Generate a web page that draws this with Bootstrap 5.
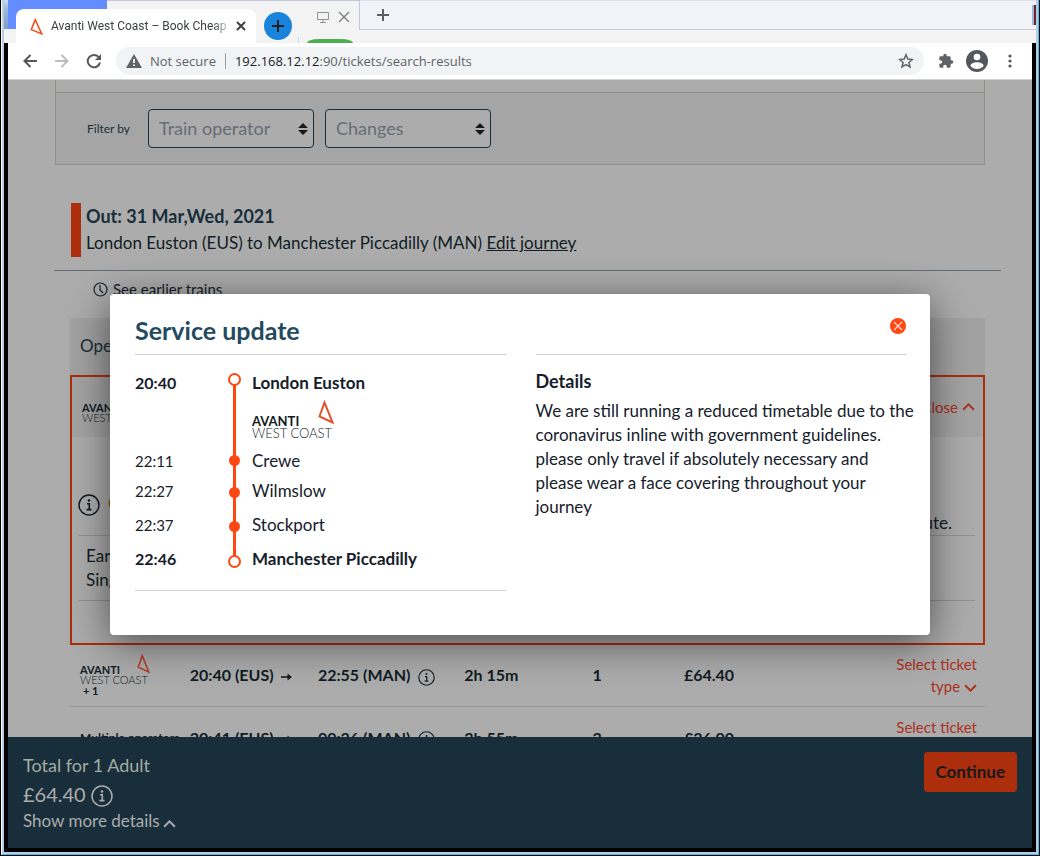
<!DOCTYPE html>
<html lang="en">
<head>
<meta charset="utf-8">
<meta name="viewport" content="width=device-width, initial-scale=1">
<title>Avanti West Coast – Book Cheap Train Tickets</title>
<link href="https://cdn.jsdelivr.net/npm/bootstrap@5.3.0/dist/css/bootstrap.min.css" rel="stylesheet">
<style>
  body { font-family: Lato, "Liberation Sans", sans-serif; font-size: 17px; line-height: 24px; color: #15202b; background: #000; }
  h1, h2, h3, p, ol { margin: 0; }
  .plain { border: 0; padding: 0; background: none; color: inherit; line-height: 0; }

  /* window frame */
  .win { height: 100vh; border: solid #000; border-width: 0 1px 1px; }
  .win-edge { border: solid #35c6e8; border-width: 0 1px 1px; border-left-color: #fff; background: #b8cce8; padding: 0 2px 2px; }
  .win-client { border: 4px solid #000; border-top: 0; min-height: 0; }
  .chrome-font { font-family: "Open Sans", "Noto Sans", sans-serif; font-size: 13px; }

  /* tab strip */
  .strip { height: 43px; background: #f3f3f4; }
  .strip-grip { width: 4px; height: 29px; background: linear-gradient(#cfdcea, #9db8d8 30%, #7f9fc0); }
  .strip-blue { width: 99px; height: 29px; background: #628cff; }
  .strip-mid { width: 253px; height: 30px; border-top: 1px solid #c3c9dc; border-right: 1px solid #c3c9dc; }
  .strip-rest { height: 30px; background: #f1f3f9; border-top: 1px solid #dde0ea; border-bottom: 1px solid #c6cddf; padding-left: 16px; }
  .strip-red { width: 4px; height: 20px; background: #9db8d8; border-right: 2px solid #6a2430; }
  .tab-front { left: 12px; top: 9px; width: 240px; height: 34px; background: #fff; border-radius: 8px 8px 0 0; padding: 0 10px 0 14px; gap: 8px; }
  .tab-name { font-family: Roboto, sans-serif; font-size: 12px; color: #3c4043; -webkit-mask-image: linear-gradient(90deg, #000 92%, rgba(0, 0, 0, .3)); mask-image: linear-gradient(90deg, #000 92%, rgba(0, 0, 0, .3)); }
  .tab-add { left: 260px; top: 12px; width: 28px; height: 28px; background: #1a83dc; }
  .tab-back { left: 294px; top: 10px; width: 60px; height: 33px; border: 0; }
  .tab-back::before { content: ""; position: absolute; left: 0; bottom: 0; height: 6px; border-left: 1px solid #d5d5d8; }
  .tab-back::after { content: ""; position: absolute; left: 9px; bottom: 0; width: 46px; height: 4px; background: #4caf50; border-radius: 12px 12px 0 0 / 4px 4px 0 0; }

  /* address bar */
  .tools { height: 37px; background: #fff; border-bottom: 1px solid #d2d2d2; padding: 0 16px 0 14px; color: #5f6368; }
  .omni { height: 28px; background: #f1f3f4; border-radius: 14px; padding: 0 10px; margin: 0 14px; }
  .omni-sep { width: 1px; height: 16px; background: #9aa0a6; margin: 0 9px; }
  .omni-url b { font-weight: 400; color: #202124; }

  /* page */
  .stage { background: #acacac; min-height: 0; }
  .wrap { padding: 0 47px; }
  .panel-top { height: 12px; border: solid #918f88; border-width: 0 1px; }
  .filters { background: #a5a5a5; border: 1px solid #918f88; padding: 16px 31px; gap: 11px; }
  .filters label { font-size: 12px; margin-right: 7px; color: #182e3a; }
  .pick { appearance: none; width: 166px; height: 39px; border: 1px solid #182e3a; border-radius: 4px; color: #666c76; font-size: 18px; padding: 0 22px 2px 10px;
    background: #acacac url("data:image/svg+xml,%3Csvg xmlns='http://www.w3.org/2000/svg' viewBox='0 0 10 12'%3E%3Cpath fill='%23151a1e' d='M5 0l5 5H0zM5 12l5-5H0z'/%3E%3C/svg%3E") no-repeat right 5px center / 10px 12px; }
  .leg { border-left: 10px solid #ac2e0d; padding-left: 5px; margin: 38px 0 13px 16px; line-height: 28px; color: #111c24; }
  .leg h2 { font-size: 18px; font-weight: 700; line-height: 26px; color: #182e3a; }
  .leg-rule { height: 1px; background: #626c74; margin: 0 -16px 0 -1px; }
  .leg a { color: inherit; }
  .earlier { padding: 7px 0 16px 38px; font-size: 15px; line-height: 22px; }
  .earlier a { gap: 5px; color: #15202b; }

  .fares { table-layout: fixed; width: calc(100% - 15px); margin-left: 15px; font-size: 16px; font-weight: 700; color: #111c24; }
  .fares th { height: 57px; background: #a2a2a2; font-size: 17px; font-weight: 400; padding: 0 10px; color: #182e3a; }
  .fares td { height: 62px; padding: 0 8px 0 10px; border-bottom: 1px solid #969696; white-space: nowrap; }
  .fares td.open-cell { padding: 0; border: 0; }
  .red-link { color: #ac3020; text-decoration: none; font-weight: 400; font-size: 15px; line-height: 22px; }
  .open-card { height: 270px; border: 2px solid #ac2e0d; background: #acacac; font-weight: 400; font-size: 17px; }
  .open-head { height: 60px; background: #a4a4a4; padding: 0 8px 0 10px; }
  .note { margin-top: 47px; padding: 2px 31px 0 6px; gap: 8px; height: 51px; }
  .note strong { color: #ac4a0d; line-height: 20px; }
  .note-text { line-height: 20px; padding-top: 7px; }
  .ticket-line { border: solid #929290; border-width: 1px 0; margin: 0 8px 0 6px; padding: 8px; height: 66px; }
  .extra { font-size: 11px; line-height: 12px; padding-left: 3px; }
  .fares .many { font-size: 12px; }

  /* operator logo */
  .oplogo { width: 70px; font-size: 11px; line-height: 10px; color: #111c24; }
  .oplogo-top { height: 22px; font-weight: 700; }
  .oplogo-top svg { width: 13px; height: 21px; margin-bottom: 1px; }
  .oplogo-sub { font-weight: 300; white-space: nowrap; }
  .oplogo-lg { width: 82px; font-size: 13px; line-height: 12px; }
  .oplogo-lg .oplogo-top { height: 27px; }
  .oplogo-lg .oplogo-top svg { width: 16px; height: 24px; margin-bottom: 3px; }

  /* basket bar */
  .basket { background: #182e3a; color: #acacac; height: 111px; padding: 15px 15px 0; }
  .basket-title { font-size: 18px; line-height: 27px; color: #a2aca2; }
  .basket-sum { font-size: 20px; line-height: 30px; gap: 5px; }
  .basket-sum svg { margin-top: 4px; }
  .basket-more { line-height: 24px; font-size: 17px; gap: 3px; }
  .basket-more svg { margin-top: 4px; }
  .go { background: #ac2e0d; color: #15191d; font-weight: 700; font-size: 17px; border-radius: 4px; height: 40px; padding: 0 12px; border: 0; min-width: 93px; }

  /* dialog */
  .update-modal { position: absolute; }
  .update-modal .modal-dialog { max-width: 820px; min-height: 100%; margin-top: 0; margin-bottom: 0; }
  .update-modal .modal-content { border: 0; border-radius: 4px; box-shadow: 0 8px 40px rgba(0, 0, 0, .55); padding: 24px 24px 44px 25px; }
  .halves { display: grid; grid-template-columns: 1fr 1fr; column-gap: 30px; }
  .half-head { height: 37px; border-bottom: 1px solid #d5cfc9; }
  .half-head h1 { font-size: 25px; line-height: 25px; font-weight: 700; color: #234a5e; }
  .route { list-style: none; padding: 16px 0 19px; border-bottom: 1px solid #d5cfc9; }
  .route li { display: grid; grid-template-columns: 91px 26px 1fr; min-height: 34px; }
  .route time { font-size: 15px; }
  .route .origin { min-height: 78px; }
  .route .close-stop { min-height: 30px; }
  .route .end-stop { min-height: 24px; }
  .route b, .route .origin time, .route .end-stop time { font-weight: 700; }
  .route .origin time, .route .end-stop time { font-size: 16px; }
  .dot-col { display: flex; flex-direction: column; align-items: center; width: 17px; padding-top: 8px;
    background: linear-gradient(#ff4713, #ff4713) no-repeat center / 3px 100%; }
  .dot-col i { flex: none; width: 11px; height: 11px; border-radius: 50%; background: #ff4713; }
  .dot-col .ring { width: 13px; height: 13px; background: #fff; border: 2px solid #ff4713; }
  .origin .dot-col { padding-top: 2px; background-position: center 8px; }
  .close-stop .dot-col { padding-top: 6px; }
  .end-stop .dot-col { background-size: 3px 10px; background-position: center top; }
  .route .oplogo { margin-top: 5px; }
  .detail { padding-top: 14px; margin-right: -10px; }
  .detail h2 { font-size: 18px; line-height: 24px; font-weight: 700; margin-bottom: 6px; }
</style>
</head>
<body>
<svg class="d-none" xmlns="http://www.w3.org/2000/svg">
  <symbol id="tri" viewBox="0 0 16 24"><path d="M6.500 2.500 L1.500 16.500 L14.500 22.500 Z" fill="none" stroke="currentColor" stroke-width="2"/></symbol>
  <symbol id="info" viewBox="0 0 22 22"><circle cx="11" cy="11" r="10" fill="none" stroke="currentColor" stroke-width="1.500"/><circle cx="11" cy="6.500" r="1.300" fill="currentColor"/><path d="M9 9.800h2.300v5.500M8.500 15.600h5" fill="none" stroke="currentColor" stroke-width="1.600"/></symbol>
  <symbol id="up" viewBox="0 0 12 8"><path d="M1 7l5-5 5 5" fill="none" stroke="currentColor" stroke-width="1.800"/></symbol>
  <symbol id="down" viewBox="0 0 12 8"><path d="M1 1l5 5 5-5" fill="none" stroke="currentColor" stroke-width="1.800"/></symbol>
  <symbol id="arrow" viewBox="0 0 12 10"><path d="M0 5h8" stroke="currentColor" stroke-width="1.600"/><path d="M6.500 1.500L11 5l-4.500 3.500z" fill="currentColor"/></symbol>
</svg>

<div class="win overflow-hidden">
<div class="win-edge h-100 d-flex flex-column">

  <header class="strip position-relative d-flex align-items-start flex-shrink-0 chrome-font">
    <div class="strip-grip"></div>
    <div class="strip-blue"></div>
    <div class="strip-mid"></div>
    <div class="strip-rest flex-grow-1 d-flex align-items-center justify-content-between">
      <button class="plain" aria-label="Add"><svg width="14" height="14" viewBox="0 0 14 14"><path d="M7 1v12M1 7h12" stroke="#5a5d61" stroke-width="2"/></svg></button>
      <span class="strip-red"></span>
    </div>
    <div class="tab-front position-absolute d-flex align-items-center">
      <svg width="13" height="17" viewBox="0 0 16 24" preserveAspectRatio="none" color="#f4511e" class="flex-shrink-0"><use href="#tri"/></svg>
      <span class="tab-name flex-grow-1 text-nowrap">Avanti West Coast – Book Cheap</span>
      <button class="plain" aria-label="Close tab"><svg width="12" height="12" viewBox="0 0 12 12"><path d="M2 2l8 8M10 2l-8 8" stroke="#3c4043" stroke-width="2"/></svg></button>
    </div>
    <button class="plain tab-add position-absolute rounded-circle" aria-label="New tab"><svg width="14" height="14" viewBox="0 0 14 14"><path d="M7 1v12M1 7h12" stroke="#202124" stroke-width="2"/></svg></button>
    <div class="tab-back position-absolute">
      <svg width="41" height="14" class="d-block ms-auto me-1" viewBox="0 0 41 14" fill="none" stroke="#8f9194">
        <path d="M4.500 2.500h11v7h-11zM10 9.500v3M7 12.500h6"/><path d="M26 2l10 10M36 2L26 12" stroke="#7a7c80" stroke-width="1.300"/>
      </svg>
    </div>
  </header>

  <div class="win-client flex-grow-1 d-flex flex-column">
    <nav class="tools d-flex align-items-center flex-shrink-0 chrome-font">
      <button class="plain" aria-label="Back"><svg width="16" height="16" viewBox="0 0 16 16"><path d="M8.500 2L2.500 8l6 6M2.500 8H15" fill="none" stroke="#54585d" stroke-width="2"/></svg></button>
      <button class="plain ms-3" aria-label="Forward"><svg width="16" height="16" viewBox="0 0 16 16"><path d="M7.500 2l6 6-6 6M13.500 8H1" fill="none" stroke="#babcbe" stroke-width="2"/></svg></button>
      <button class="plain ms-3" aria-label="Reload"><svg width="16" height="16" viewBox="0 0 16 16"><path d="M13 4.500A6.200 6.200 0 1 0 14 9.500" fill="none" stroke="#54585d" stroke-width="2"/><path d="M15 1v6H9z" fill="#54585d"/></svg></button>
      <div class="omni flex-grow-1 d-flex align-items-center">
        <svg width="16" height="14" viewBox="0 0 16 14" class="me-2"><path d="M8 0l8 14H0z" fill="#5f6368"/><path d="M8 5v4M8 10.500v1.600" stroke="#fff" stroke-width="1.800"/></svg>
        <span>Not secure</span><span class="omni-sep"></span>
        <span class="omni-url flex-grow-1"><b>192.168.12.12</b>:90/tickets/search-results</span>
        <button class="plain" aria-label="Bookmark"><svg width="16" height="16" viewBox="0 0 16 16"><path d="M8 1.800l1.800 4.300 4.600.4-3.500 3 1.100 4.500L8 11.600 4 14l1.100-4.500-3.500-3 4.600-.4z" fill="none" stroke="#5f6368" stroke-width="1.500"/></svg></button>
      </div>
      <button class="plain" aria-label="Extensions"><svg width="16" height="16" viewBox="0 0 24 24" fill="#5f6368"><path d="M20.500 11H19V7a2 2 0 0 0-2-2h-4V3.500a2.500 2.500 0 0 0-5 0V5H4a2 2 0 0 0-2 2v3.800h1.500a2.700 2.700 0 0 1 0 5.400H2V20a2 2 0 0 0 2 2h3.800v-1.500a2.700 2.700 0 0 1 5.400 0V22H17a2 2 0 0 0 2-2v-4h1.500a2.500 2.500 0 0 0 0-5z"/></svg></button>
      <button class="plain mx-2 px-1" aria-label="Profile"><svg width="22" height="22" viewBox="0 0 22 22"><circle cx="11" cy="11" r="11" fill="#54585d"/><circle cx="11" cy="7" r="3.300" fill="#fff"/><path d="M4.500 16c0-5 13-5 13 0-3 4-10 4-13 0z" fill="#fff"/></svg></button>
      <button class="plain ms-1" aria-label="Menu"><svg width="12" height="16" viewBox="0 0 12 16" fill="#54585d"><circle cx="6" cy="3" r="1.600"/><circle cx="6" cy="8" r="1.600"/><circle cx="6" cy="13" r="1.600"/></svg></button>
    </nav>

    <div class="stage flex-grow-1 d-flex flex-column position-relative">
      <main class="wrap flex-grow-1 overflow-hidden">
        <div class="panel-top"></div>
        <form class="filters d-flex align-items-center">
          <label for="op">Filter by</label>
          <select id="op" class="pick"><option>Train operator</option></select>
          <select id="ch" class="pick" aria-label="Changes"><option>Changes</option></select>
        </form>

        <section class="leg">
          <h2>Out: 31 Mar,Wed, 2021</h2>
          <p>London Euston (EUS) to Manchester Piccadilly (MAN) <a href="#">Edit journey</a></p>
        </section>
        <div class="leg-rule"></div>
        <div class="earlier"><a href="#" class="d-inline-flex align-items-center text-decoration-none">
          <svg width="15" height="15" viewBox="0 0 15 15" fill="none" stroke="currentColor" stroke-width="1.200"><circle cx="7.500" cy="7.500" r="6.500"/><path d="M7 3v5l3 3"/></svg>See earlier trains</a></div>

        <table class="fares">
          <colgroup><col style="width:12%"><col style="width:14%"><col style="width:16%"><col style="width:14%"><col style="width:10%"><col></colgroup>
          <thead><tr><th>Operator</th><th></th><th></th><th></th><th></th><th></th></tr></thead>
          <tbody>
            <tr><td class="open-cell" colspan="6">
              <div class="open-card">
                <div class="open-head d-flex align-items-center justify-content-between">
                  <div class="oplogo"><div class="oplogo-top d-flex align-items-end justify-content-between">AVANTI</div><div class="oplogo-sub">WEST COAST</div></div>
                  <a href="#" class="red-link d-flex align-items-center gap-1">Close <svg width="13" height="9"><use href="#up"/></svg></a>
                </div>
                <div class="note d-flex">
                  <svg width="22" height="22" class="mt-2 flex-shrink-0"><use href="#info"/></svg>
                  <div class="note-text flex-grow-1"><strong class="d-block">Cheapest</strong><span class="d-block text-end">by any permitted route.</span></div>
                </div>
                <div class="ticket-line">Earlybird<br>Single</div>
              </div>
            </td></tr>
            <tr>
              <td><div class="oplogo"><div class="oplogo-top d-flex align-items-end justify-content-between">AVANTI <svg color="#b5402c"><use href="#tri"/></svg></div><div class="oplogo-sub">WEST COAST</div></div><div class="extra">+ 1</div></td>
              <td>20:40 (EUS) <svg width="12" height="10" class="ms-1"><use href="#arrow"/></svg></td>
              <td>22:55 (MAN) <svg width="17" height="17" class="ms-1"><use href="#info"/></svg></td>
              <td>2h 15m</td><td>1</td>
              <td><div class="d-flex justify-content-between align-items-center">£64.40 <a href="#" class="red-link text-end">Select ticket<br>type <svg width="13" height="9"><use href="#down"/></svg></a></div></td>
            </tr>
            <tr>
              <td class="many">Multiple operators</td>
              <td>20:41 (EUS) <svg width="12" height="10" class="ms-1"><use href="#arrow"/></svg></td>
              <td>00:36 (MAN) <svg width="17" height="17" class="ms-1"><use href="#info"/></svg></td>
              <td>3h 55m</td><td>2</td>
              <td><div class="d-flex justify-content-between align-items-center">£36.00 <a href="#" class="red-link text-end">Select ticket<br>type <svg width="13" height="9"><use href="#down"/></svg></a></div></td>
            </tr>
          </tbody>
        </table>
      </main>

      <footer class="basket flex-shrink-0 d-flex justify-content-between align-items-start">
        <div>
          <div class="basket-title">Total for 1 Adult</div>
          <div class="basket-sum d-flex align-items-center">£64.40 <svg width="22" height="22"><use href="#info"/></svg></div>
          <button class="plain basket-more d-flex align-items-center">Show more details <svg width="13" height="9"><use href="#up"/></svg></button>
        </div>
        <button class="go">Continue</button>
      </footer>

      <div class="modal d-block update-modal" role="dialog" aria-labelledby="upd">
        <div class="modal-dialog modal-dialog-centered">
          <div class="modal-content">
            <div class="halves">
              <div class="half-head"><h1 id="upd">Service update</h1></div>
              <div class="half-head d-flex justify-content-end align-items-start">
                <button class="plain" aria-label="Close"><svg width="16" height="16" viewBox="0 0 16 16"><circle cx="8" cy="8" r="8" fill="#ff4713"/><path d="M4 4l8 8M12 4l-8 8" stroke="#ffe0d6" stroke-width="1.100"/></svg></button>
              </div>
              <ol class="route">
                <li class="origin"><time>20:40</time><span class="dot-col"><i class="ring"></i></span>
                  <div><b>London Euston</b>
                    <div class="oplogo oplogo-lg"><div class="oplogo-top d-flex align-items-end justify-content-between">AVANTI <svg color="#e2502f"><use href="#tri"/></svg></div><div class="oplogo-sub">WEST COAST</div></div>
                  </div></li>
                <li class="close-stop"><time>22:11</time><span class="dot-col"><i></i></span><span>Crewe</span></li>
                <li><time>22:27</time><span class="dot-col"><i></i></span><span>Wilmslow</span></li>
                <li><time>22:37</time><span class="dot-col"><i></i></span><span>Stockport</span></li>
                <li class="end-stop"><time>22:46</time><span class="dot-col"><i class="ring"></i></span><b>Manchester Piccadilly</b></li>
              </ol>
              <div class="detail">
                <h2>Details</h2>
                <p>We are still running a reduced timetable due to the coronavirus inline with government guidelines. please only travel if absolutely necessary and please wear a face covering throughout your journey</p>
              </div>
            </div>
          </div>
        </div>
      </div>
    </div>
  </div>
</div>
</div>
<script src="https://cdn.jsdelivr.net/npm/bootstrap@5.3.0/dist/js/bootstrap.bundle.min.js"></script>
</body>
</html>
